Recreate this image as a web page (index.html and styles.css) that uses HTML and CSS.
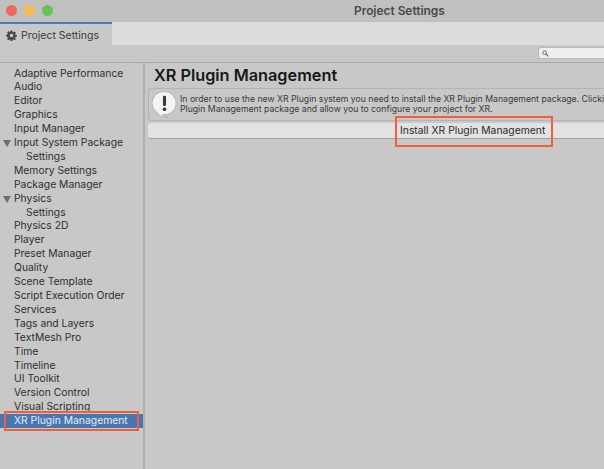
FILE: index.html
```html
<!DOCTYPE html>
<html lang="en">
<head>
<meta charset="utf-8">
<title>Project Settings</title>
<link rel="stylesheet" href="styles.css">
</head>
<body>
<div class="window">
  <header class="titlebar">
    <div class="lights"><span class="light red"></span><span class="light yellow"></span><span class="light green"></span></div>
    <div class="wintitle">Project Settings</div>
  </header>
  <div class="tabstrip">
    <div class="tab">
      <svg class="gear" viewBox="0 0 12 12" width="11" height="11"><path fill="#4a4a4a" fill-rule="evenodd" d="M5 .6h2l.3 1.500.8.350 1.300-.850 1.400 1.400-.850 1.300.350.800 1.500.300v2l-1.500.300-.350.800.850 1.300-1.400 1.400-1.300-.850-.8.350-.3 1.500H5l-.3-1.500-.8-.350-1.300.850-1.400-1.400.850-1.300-.350-.800L.2 7V5l1.500-.300.350-.800-.850-1.300 1.400-1.400 1.300.850.8-.350zM6 4a2 2 0 1 0 0 4 2 2 0 0 0 0-4z"/></svg>
      <span>Project Settings</span>
    </div>
  </div>
  <div class="toolbar">
    <div class="search">
      <svg viewBox="0 0 8 8" width="7" height="7"><circle cx="3" cy="3" r="2.100" fill="none" stroke="#666" stroke-width="1.100"/><path d="M4.600 4.600 7.200 7.200" stroke="#666" stroke-width="1.300"/></svg>
    </div>
  </div>
  <div class="main">
    <nav class="sidebar">
      <ul class="list">
        <li class="row">Adaptive Performance</li>
        <li class="row">Audio</li>
        <li class="row">Editor</li>
        <li class="row">Graphics</li>
        <li class="row">Input Manager</li>
        <li class="row has-arrow"><span class="arrow"></span>Input System Package</li>
        <li class="row child">Settings</li>
        <li class="row">Memory Settings</li>
        <li class="row">Package Manager</li>
        <li class="row has-arrow"><span class="arrow"></span>Physics</li>
        <li class="row child">Settings</li>
        <li class="row">Physics 2D</li>
        <li class="row">Player</li>
        <li class="row">Preset Manager</li>
        <li class="row">Quality</li>
        <li class="row">Scene Template</li>
        <li class="row">Script Execution Order</li>
        <li class="row">Services</li>
        <li class="row">Tags and Layers</li>
        <li class="row">TextMesh Pro</li>
        <li class="row">Time</li>
        <li class="row">Timeline</li>
        <li class="row">UI Toolkit</li>
        <li class="row">Version Control</li>
        <li class="row">Visual Scripting</li>
        <li class="row selected">XR Plugin Management<span class="mark mark-side"></span></li>
      </ul>
    </nav>
    <section class="content">
      <h1 class="heading">XR Plugin Management</h1>
      <div class="helpbox">
        <svg class="helpicon" viewBox="0 0 26 28" width="25" height="27"><path fill="#f4f4f4" stroke="#9a9a9a" stroke-width=".6" d="M13 .6a12 12 0 1 1-2.600 23.700c1.200 1.400 3 2.400 6 3-4.500.3-8.500-1.200-10.500-4.500A12 12 0 0 1 13 .6z"/><rect x="11.400" y="5" width="3.200" height="10.500" rx="1.300" fill="#3a3a3a"/><circle cx="13" cy="19" r="1.900" fill="#3a3a3a"/></svg>
        <p class="helptext">In order to use the new XR Plugin system you need to install the XR Plugin Management package. Clicking<br>Plugin Management package and allow you to configure your project for XR.</p>
      </div>
      <div class="install">
        <span class="install-label">Install XR Plugin Management<span class="mark mark-btn"></span></span>
      </div>
    </section>
  </div>
</div>
</body>
</html>
```

FILE: styles.css
```css
* { box-sizing: border-box; }
html, body { margin: 0; padding: 0; }
body {
  width: 604px;
  height: 469px;
  overflow: hidden;
  font-family: Inter, "Liberation Sans", sans-serif;
  color: #2b2b2b;
  background: #c8c8c8;
}
.window { width: 604px; height: 469px; display: flex; flex-direction: column; overflow: hidden; }
.titlebar {
  height: 22px;
  flex: none;
  background: #c0c0c0;
  display: flex;
  align-items: center;
  position: relative;
  padding-left: 6px;
}
.lights { display: flex; gap: 7px; margin-top: -2px; }
.light { width: 11px; height: 11px; border-radius: 50%; }
.red { background: #ee6a5f; }
.yellow { background: #f5bd4f; }
.green { background: #61c454; }
.wintitle {
  position: absolute;
  left: 354px;
  top: 3px;
  font-size: 11.900px;
  font-weight: 600;
  color: #4a4a4a;
  white-space: nowrap;
}
.tabstrip { height: 23px; flex: none; background: #dcdcdc; display: flex; }
.tab {
  width: 112px;
  background: #c8c8c8;
  border-top: 2px solid #4a7ab8;
  display: flex;
  align-items: center;
  gap: 4px;
  padding-left: 6px;
  padding-top: 1px;
  font-size: 10.500px;
  color: #3a3a3a;
  white-space: nowrap;
}
.toolbar {
  height: 18px;
  flex: none;
  background: #c8c8c8;
  border-bottom: 1px solid #a8a8a8;
  display: flex;
  justify-content: flex-end;
  align-items: flex-start;
  padding-top: 2px;
}
.search {
  width: 66px;
  height: 12px;
  background: #efefef;
  border: 1px solid #b8b8b8;
  border-right: 0;
  border-radius: 3px 0 0 3px;
  display: flex;
  align-items: center;
  padding-left: 3px;
}
.main { flex: 1; display: flex; min-height: 0; }
.sidebar {
  width: 145px;
  flex: none;
  border-right: 2px solid #b0b0b0;
  padding-top: 3.500px;
}
.list { list-style: none; margin: 0; padding: 0; }
.row {
  height: 13.920px;
  line-height: 13.920px;
  padding-left: 14px;
  font-size: 10.350px;
  color: #2f2f2f;
  white-space: nowrap;
  position: relative;
}
.child { padding-left: 26px; }
.arrow {
  position: absolute;
  left: 3px;
  top: 4px;
  border-left: 4px solid transparent;
  border-right: 4px solid transparent;
  border-top: 7px solid #6f6f6f;
}
.selected { background: #4a76b0; color: #e4ecf6; width: 143px; }
.mark { position: absolute; border: 2px solid #ee5f3a; pointer-events: none; }
.mark-side { left: 4px; top: -3px; width: 135px; height: 20px; }
.content { flex: 1; min-width: 0; padding: 2px 0 0 3px; overflow: hidden; }
.heading {
  margin: 0 0 0 6px;
  font-size: 16.300px;
  line-height: 20px;
  font-weight: 600;
  color: #171717;
  white-space: nowrap;
}
.helpbox {
  width: 470px;
  height: 33px;
  margin-top: 3px;
  background: #c8c8c8;
  border: 1px solid #b4b4b4;
  border-right: 0;
  border-radius: 3px 0 0 3px;
  display: flex;
  align-items: center;
  gap: 3px;
  padding-left: 3px;
}
.helpicon { flex: none; }
.helptext {
  margin: -1px 0 0;
  flex: none;
  font-size: 8.700px;
  line-height: 10.500px;
  color: #3a3a3a;
  white-space: nowrap;
}
.install {
  width: 470px;
  height: 16px;
  margin-top: 2px;
  background: #e2e2e2;
  border-bottom: 1px solid #a0a0a0;
  border-radius: 3px 0 0 3px;
  padding-left: 252px;
  font-size: 10.350px;
  line-height: 14px;
  color: #2b2b2b;
  white-space: nowrap;
}
.install-label { position: relative; display: inline-block; }
.mark-btn { left: -5px; top: -7px; width: 158px; height: 31px; }
```
